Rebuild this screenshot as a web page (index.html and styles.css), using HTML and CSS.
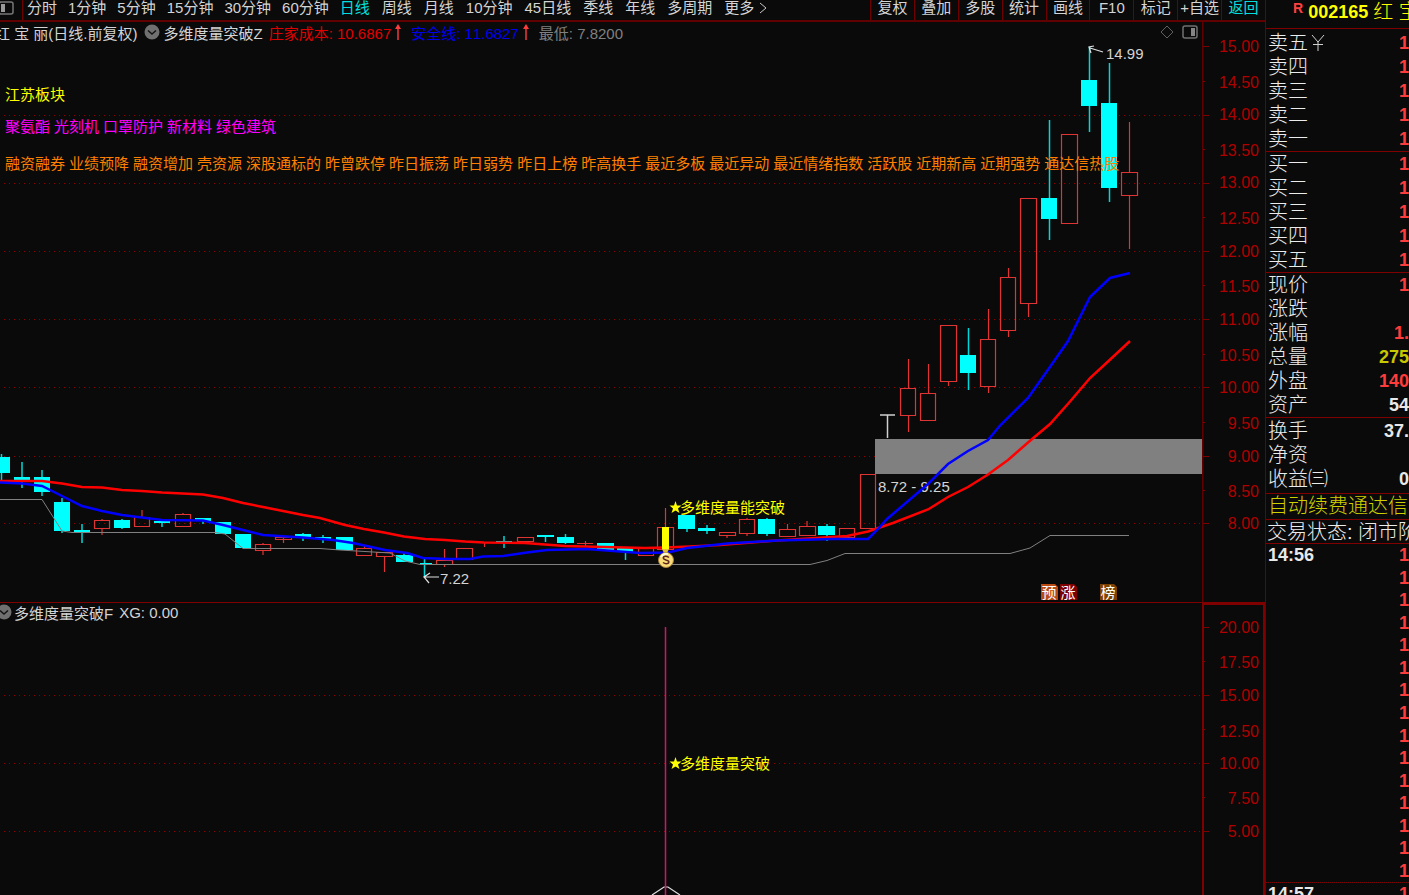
FILE: index.html
```html
<!DOCTYPE html>
<html lang="zh-CN">
<head>
<meta charset="utf-8">
<title>002165 红宝丽</title>
<link rel="stylesheet" href="styles.css">
</head>
<body>
<div class="app">
  <main class="workspace">
    <nav class="toolbar">
      <button class="toggle" aria-label="侧栏">
        <svg width="14" height="14" viewBox="0 0 14 14"><rect x="-1" y="1" width="14" height="12" rx="2" fill="none" stroke="#777" stroke-width="1.5"/><rect x="1" y="3" width="4" height="8" fill="#999"/></svg>
      </button>
      <div class="periods">
        <div class="minutes">
          <button>分时</button><button>1分钟</button><button>5分钟</button><button>15分钟</button><button>30分钟</button><button>60分钟</button>
        </div>
        <div class="days">
          <button class="active">日线</button><button>周线</button><button>月线</button><button>10分钟</button><button>45日线</button><button>季线</button><button>年线</button><button>多周期</button><button class="more">更多<svg width="8" height="12" viewBox="0 0 8 12"><path d="M1 1L7 6L1 11" fill="none" stroke="#c8c8c8"/></svg></button>
        </div>
      </div>
      <div class="tools">
        <button>复权</button><button>叠加</button><button>多股</button><button>统计</button><button>画线</button><button>F10</button><button>标记</button><button>+自选</button><button class="active">返回</button>
      </div>
    </nav>

    <section class="pane upper">
      <div class="plot">
        <svg class="chart" viewBox="0 22 1202 580" preserveAspectRatio="xMinYMin meet">
          <path class="grid" d="M4 115.500H1202M4 183.500H1202M4 251.500H1202M4 319.500H1202M4 387.500H1202M4 456.500H1202M4 523.500H1202"/>
          <rect x="875" y="439" width="327" height="35" fill="#808080"/>
          <path class="fall-wick" d="M1.500 454V482M22 462V488M42 470V496M62 498V533M82 524V543M122 519V529M162 519V527M203 518V524M303 533V541M323 535V543M404 553V562M424.500 559V578M504 536V548M545.500 535V542M565.500 534V544M625.500 547V560M687 515V532M707 525V534M767 518V536M827 524V541M968.500 328V390M1049.500 120V240M1089.500 47V132M1109.500 63V202"/>
          <path class="fall" d="M-6 457H10V473H-6zM14 477H30V480H14zM34 477H50V492H34zM54 502H70V531H54zM74 530H90V532H74zM114 520H130V528H114zM154 521H170V523H154zM195 518H211V521H195zM215 522H231V534H215zM235 534H251V548H235zM295 534H311V538H295zM315 537H331V539H315zM336 537H353V550H336zM396 555H413V562H396zM420 563H432V565H420zM496 541H512V542H496zM537 535H554V537H537zM557 537H574V543H557zM597 543H614V550H597zM617 547H633V552H617zM678 515H695V529H678zM698 528H715V531H698zM758 519H775V534H758zM818 526H835V535H818zM960 355H976V373H960zM1041 198H1057V219H1041zM1081 80H1097V106H1081zM1101 103H1117V188H1101z"/>
          <path class="rise" d="M94.500 520.500H109.500V528.500H94.500zM102 519V521M102 529V535M134.500 517.500H149.500V526.500H134.500zM142 510V517M175.500 514.500H190.500V526.500H175.500zM183 513V515M255.500 544.500H270.500V550.500H255.500zM263 543V545M263 550V555M275.500 537.500H291.500V539.500H275.500zM283.500 536V543M356.500 548.500H371.500V555.500H356.500zM364.500 546V548M376.500 552.500H392.500V556.500H376.500zM384.500 557V572M436.500 560.500H452.500V564.500H436.500zM444.500 549V560M444.500 565V567M456.500 548.500H472.500V559.500H456.500zM476 542.500H492M484.500 543V547M517.500 537.500H533.500V541.500H517.500zM577 543.500H593M585.500 541V546M638.500 548.500H653.500V555.500H638.500zM657.500 527.500H673.500V549.500H657.500zM665.500 508V527M719.500 532.500H735.500V535.500H719.500zM727 536V538M739.500 519.500H754.500V533.500H739.500zM747 518V519M747 534V536M779.500 529.500H795.500V536.500H779.500zM787.500 524V529M799.500 526.500H815.500V535.500H799.500zM807 521V526M839.500 528.500H854.500V537.500H839.500zM860.500 474.500H875.500V528.500H860.500zM900.500 388.500H915.500V415.500H900.500zM908.500 359V388M908.500 416V432M920.500 393.500H935.500V420.500H920.500zM928.500 364V393M940.500 325.500H956.500V381.500H940.500zM948.500 382V386M980.500 339.500H995.500V386.500H980.500zM988.500 309V339M988.500 387V393M1000.500 277.500H1015.500V330.500H1000.500zM1008.500 268V277M1008.500 331V337M1020.500 198.500H1036.500V303.500H1020.500zM1028.500 304V317M1061.500 134.500H1077.500V223.500H1061.500zM1121.500 172.500H1137.500V195.500H1121.500zM1129.500 122V172M1129.500 196V249"/>
          <path d="M880 415H895M887.500 415V438" fill="none" stroke="#d0d0d0" stroke-width="1.500"/>
          <text class="note" x="878" y="492">8.72 - 9.25</text>
          <polyline class="low-line" points="0,499.500 42,499.500 62,531 72,532.500 215,532.500 225,534 243,548.500 320,548.500 340,550 390,553 405,561 420,564.500 810,564.500 827,560.500 845,553.500 1010,553.500 1030,548 1050,535.500 1129,535.500"/>
          <polyline class="cost-line" points="0,481 42,481 62,483.500 82,487 102,487.500 122,490 142,491 162,492.500 203,494.500 223,498 243,503 263,507 283,511 303,515 320,518 345,525 364,529 384,532.500 404,536.500 425,539 445,540 465,541.500 484,542.500 525,543 565,546 605,547 645,548 665,547.500 690,546.500 720,545 770,541 800,539 847,536 868,531.500 893,523 928,509.500 948,497 968,487 988,474.500 1008,460 1028,442.500 1050,424 1070,401.500 1090,378 1108,361.500 1130,341"/>
          <polyline class="safe-line" points="0,482.500 22,483.500 42,486 62,496 82,506 102,511 122,515 142,517.500 162,520 203,520.500 223,525 243,530 263,535 303,537.500 333,540 353,543 385,550 407,553 423,558 447,559 470,559 483,556.500 503,556 527,552.500 547,550 587,549 620,551.500 640,553 668,552.500 687,548 727,543.500 777,540.500 833,539 868,539 878,529 887,519 928,484 948,464 968,451 988,440 1000,425.500 1028,398 1052,364 1068,341 1090,297 1110,278 1130,273"/>
          <path d="M424 577H439M430 573L424 577L429 583" class="pointer"/>
          <text class="note" x="440" y="584">7.22</text>
          <path d="M1103 52L1090 48M1094 46L1089 47L1091 53" class="pointer"/>
          <text class="note" x="1106" y="59">14.99</text>
          <rect x="662" y="527" width="7" height="22" fill="#ff0"/>
          <path d="M662 549H669L667 553H670L666 556L662 553H664z" fill="#e4c33c"/>
          <circle cx="666" cy="560" r="7.500" fill="#f8dc78" stroke="#a8803a"/>
          <path d="M661 557Q663 553 668 554" fill="none" stroke="#fffbe0" stroke-width="2"/>
          <path d="M669 557.500Q666 555.500 663.500 557Q662.500 559 666 560Q670 561 668.500 563Q666 564.500 663 562.500" fill="none" stroke="#5c241c" stroke-width="1.500"/>
          <path class="star" d="M675.500 501L677 505.500H681.500L678 508.500L679.500 513L675.500 510.500L671.500 513L673 508.500L669.500 505.500H674z"/>
          <text class="signal" x="680" y="513">多维度量能突破</text>
          <g class="badge">
            <path d="M1041 584H1055L1058 587V600H1041z" fill="#b84a12"/><text x="1049" y="598">预</text>
            <path d="M1060 584H1074L1077 587V600H1060z" fill="#7e0000"/><text x="1068" y="598">涨</text>
            <path d="M1100 584H1114L1117 587V600H1100z" fill="#7c4000"/><text x="1108" y="598">榜</text>
          </g>
        </svg>
        <div class="overlay">
          <header class="legend">
            <span class="stock">红 宝 丽(日线.前复权)</span>
            <button class="drop" aria-label="指标菜单"><svg width="16" height="16" viewBox="0 0 16 16"><circle cx="8" cy="8" r="7.500" fill="#707070"/><path d="M4 6.500L8 10L12 6.500" fill="none" stroke="#141414" stroke-width="1.500"/></svg></button>
            <span class="name">多维度量突破Z</span>
            <span class="cost">庄家成本: 10.6867</span>
            <svg class="arrow" width="8" height="16" viewBox="0 0 8 16"><path d="M4 0L7 5H4.700V16H3.300V5H1z" fill="#ff3c3c"/></svg>
            <span class="safe">安全线: 11.6827</span>
            <svg class="arrow" width="8" height="16" viewBox="0 0 8 16"><path d="M4 0L7 5H4.700V16H3.300V5H1z" fill="#ff3c3c"/></svg>
            <span class="low">最低: 7.8200</span>
            <span class="legend-tools">
              <button aria-label="标记点"><svg width="14" height="14" viewBox="0 0 14 14"><path d="M7 1L13 7L7 13L1 7z" fill="none" stroke="#606060"/></svg></button>
              <button aria-label="布局"><svg width="16" height="14" viewBox="0 0 16 14"><rect x="1" y="1" width="14" height="12" rx="2" fill="none" stroke="#707070" stroke-width="1.500"/><rect x="9" y="3" width="4" height="8" fill="#858585"/></svg></button>
            </span>
          </header>
          <p class="region">江苏板块</p>
          <p class="themes"><span>聚氨酯</span><span>光刻机</span><span>口罩防护</span><span>新材料</span><span>绿色建筑</span></p>
          <p class="styles"><span>融资融券</span><span>业绩预降</span><span>融资增加</span><span>壳资源</span><span>深股通标的</span><span>昨曾跌停</span><span>昨日振荡</span><span>昨日弱势</span><span>昨日上榜</span><span>昨高换手</span><span>最近多板</span><span>最近异动</span><span>最近情绪指数</span><span>活跃股</span><span>近期新高</span><span>近期强势</span><span>通达信热股</span></p>
        </div>
      </div>
      <svg class="axis" viewBox="1202 22 63 580" preserveAspectRatio="xMinYMin meet">
        <path d="M1202.500 22V602" stroke="#600000" stroke-width="2"/>
        <path class="tick" d="M1203 46.500H1209M1203 115.500H1209M1203 183.500H1209M1203 251.500H1209M1203 319.500H1209M1203 387.500H1209M1203 456.500H1209M1203 523.500H1209M1203 81.500H1205M1203 149.500H1205M1203 217.500H1205M1203 285.500H1205M1203 354.500H1205M1203 422.500H1205M1203 490.500H1205"/>
        <g text-anchor="end">
          <text x="1259" y="52">15.00</text><text x="1259" y="88">14.50</text><text x="1259" y="120">14.00</text><text x="1259" y="156">13.50</text><text x="1259" y="188">13.00</text><text x="1259" y="224">12.50</text><text x="1259" y="257">12.00</text><text x="1259" y="292">11.50</text><text x="1259" y="325">11.00</text><text x="1259" y="361">10.50</text><text x="1259" y="393">10.00</text><text x="1259" y="429">9.50</text><text x="1259" y="462">9.00</text><text x="1259" y="497">8.50</text><text x="1259" y="529">8.00</text>
        </g>
      </svg>
    </section>

    <section class="pane lower">
      <div class="plot">
        <svg class="chart" viewBox="0 603 1202 292" preserveAspectRatio="xMinYMin meet">
          <path class="grid" d="M4 695.500H1202M4 763.500H1202M4 831.500H1202"/>
          <path d="M652 895L664 887H668L680 895" fill="none" stroke="#e0e0e0" stroke-width="1.200"/>
          <path d="M665.500 627V895" stroke="#d8106c" stroke-width="1.500"/>
          <path class="star" d="M675.500 757L677 761.500H681.500L678 764.500L679.500 769L675.500 766.500L671.500 769L673 764.500L669.500 761.500H674z"/>
          <text class="signal" x="680" y="769">多维度量突破</text>
        </svg>
        <div class="overlay">
          <header class="legend">
            <button class="drop cut" aria-label="指标菜单"><svg width="16" height="16" viewBox="0 0 16 16"><circle cx="8" cy="8" r="7.500" fill="#707070"/><path d="M4 6.500L8 10L12 6.500" fill="none" stroke="#141414" stroke-width="1.500"/></svg></button>
            <span class="name">多维度量突破F</span>
            <span>XG: 0.00</span>
          </header>
        </div>
      </div>
      <svg class="axis" viewBox="1202 603 63 292" preserveAspectRatio="xMinYMin meet">
        <path d="M1203 895V604H1264V895" fill="none" stroke="#800000" stroke-width="2"/>
        <path class="tick" d="M1204 627.500H1209M1204 695.500H1209M1204 763.500H1209M1204 831.500H1209M1204 661.500H1205M1204 729.500H1205M1204 797.500H1205"/>
        <g text-anchor="end">
          <text x="1259" y="633">20.00</text><text x="1259" y="668">17.50</text><text x="1259" y="701">15.00</text><text x="1259" y="737">12.50</text><text x="1259" y="769">10.00</text><text x="1259" y="804">7.50</text><text x="1259" y="837">5.00</text>
        </g>
      </svg>
    </section>
  </main>

  <aside class="quote">
    <h1><sup>R</sup><b>002165</b><span>红 宝 丽</span></h1>
    <dl class="asks">
      <div><dt>卖五<svg width="14" height="18" viewBox="0 0 14 18"><path d="M1 1L7 8L13 1M7 8V17M2 10.500H12" fill="none" stroke="#d0d0d0"/></svg></dt><dd class="up">1</dd></div>
      <div><dt>卖四</dt><dd class="up">1</dd></div>
      <div><dt>卖三</dt><dd class="up">1</dd></div>
      <div><dt>卖二</dt><dd class="up">1</dd></div>
      <div><dt>卖一</dt><dd class="up">1</dd></div>
    </dl>
    <dl>
      <div><dt>买一</dt><dd class="up">1</dd></div>
      <div><dt>买二</dt><dd class="up">1</dd></div>
      <div><dt>买三</dt><dd class="up">1</dd></div>
      <div><dt>买四</dt><dd class="up">1</dd></div>
      <div><dt>买五</dt><dd class="up">1</dd></div>
    </dl>
    <dl>
      <div><dt>现价</dt><dd class="up">1</dd></div>
      <div><dt>涨跌</dt><dd></dd></div>
      <div><dt>涨幅</dt><dd class="up">1.</dd></div>
      <div><dt>总量</dt><dd class="volume">275</dd></div>
      <div><dt>外盘</dt><dd class="up">140</dd></div>
      <div><dt>资产</dt><dd>54</dd></div>
    </dl>
    <dl class="ratios">
      <div><dt>换手</dt><dd>37.</dd></div>
      <div><dt>净资</dt><dd></dd></div>
      <div><dt>收益㈢</dt><dd>0</dd></div>
    </dl>
    <p class="promo">自动续费通达信</p>
    <p class="status">交易状态: 闭市阶段</p>
    <ol class="ticks">
      <li><time>14:56</time><span>1</span></li>
      <li><span>1</span></li><li><span>1</span></li><li><span>1</span></li><li><span>1</span></li><li><span>1</span></li><li><span>1</span></li><li><span>1</span></li><li><span>1</span></li><li><span>1</span></li><li><span>1</span></li><li><span>1</span></li><li><span>1</span></li><li><span>1</span></li><li><span>1</span></li>
    </ol>
    <div class="next"><time>14:57</time><span>1</span></div>
  </aside>
</div>
</body>
</html>
```

FILE: styles.css
```css
* { box-sizing: border-box; }

body, h1, p, dl, dd, ol {
  margin: 0;
  padding: 0;
}

body {
  background: #0a0a0a;
  color: #d4d4d4;
  font-family: "Liberation Sans", "Noto Sans CJK SC", sans-serif;
  font-size: 15px;
  font-weight: 400;
  font-kerning: none;
}

button {
  margin: 0;
  padding: 0;
  border: 0;
  background: none;
  color: inherit;
  font: inherit;
  line-height: inherit;
  white-space: nowrap;
}

svg { display: block; flex: none; }

.app {
  display: grid;
  grid-template-columns: minmax(0, 1fr) 144px;
  height: 100vh;
  overflow: hidden;
}

.workspace {
  display: grid;
  grid-template-rows: 22px 581fr 292fr;
  min-width: 0;
}

/* toolbar */
.toolbar {
  display: flex;
  border-bottom: 2px solid #600000;
  line-height: 16px;
  overflow: hidden;
}
.toolbar .active { color: #00e0e0; }
.toggle {
  width: 23px;
  border-right: 1px solid #700000;
}
.toggle svg { margin-bottom: 4px; }
.periods {
  display: flex;
  flex: 1;
  gap: 11px;
  padding-left: 4px;
  align-items: flex-start;
}
.minutes { display: flex; gap: 11px; }
.days { display: flex; gap: 12px; }
.more {
  display: flex;
  align-items: center;
  gap: 5px;
}
.tools {
  display: grid;
  grid-template-columns: repeat(9, 1fr);
  width: 395px;
}
.tools button {
  display: flex;
  justify-content: center;
  border-left: 1px solid #700000;
}

/* chart panes */
.pane {
  display: grid;
  grid-template-columns: minmax(0, 1fr) 63px;
  min-height: 0;
}
.upper { border-bottom: 1px solid #800000; }
.plot {
  position: relative;
  min-height: 0;
  overflow: hidden;
}
.chart, .axis {
  width: 100%;
  height: 100%;
}
.axis { overflow: hidden; }
.axis text {
  fill: #b00000;
  font-size: 16px;
}
.tick { stroke: #800000; }
.grid {
  fill: none;
  stroke: #900000;
  stroke-dasharray: 1 4;
}
.fall { fill: #0ff; }
.fall-wick { stroke: #00d8d8; stroke-width: 1.5; }
.rise { fill: none; stroke: #e03434; stroke-width: 1.2; }
.low-line { fill: none; stroke: #808080; }
.cost-line { fill: none; stroke: #f00; stroke-width: 2.5; }
.safe-line { fill: none; stroke: #00f; stroke-width: 2.5; }
.pointer { fill: none; stroke: #e0e0e0; stroke-width: 1.2; }
.note { fill: #d4d4d4; font-size: 15px; }
.signal { fill: #ff0; font-size: 15px; }
.star { fill: #ff0; }
.badge text {
  fill: #fff;
  font-size: 15px;
  text-anchor: middle;
}

.overlay {
  position: absolute;
  inset: 0;
  white-space: nowrap;
}
.legend {
  display: flex;
  align-items: center;
  gap: 6px;
  height: 20px;
}
.stock { margin-left: -5px; }
.name { margin-left: -2px; }
.cost { color: #e00000; }
.safe { margin-left: 3px; color: #0000f0; }
.arrow { margin-left: -3px; }
.low { margin-left: 3px; color: #808080; }
.cut { margin-left: -4px; }
.lower .name { margin-left: -4px; }
.lower .legend { height: 18px; }
.legend-tools {
  display: flex;
  gap: 8px;
  margin-left: auto;
  padding-right: 4px;
}
.region, .themes, .styles {
  display: flex;
  gap: 4px;
  padding-left: 5px;
  line-height: 20px;
}
.region { margin-top: 43px; color: #ff0; }
.themes { margin-top: 12px; color: #f0f; }
.styles { margin-top: 17px; color: #ff8000; }

/* quote panel */
.quote {
  display: flex;
  flex-direction: column;
  min-height: 0;
  border-left: 1px solid #700000;
  overflow: hidden;
  white-space: nowrap;
  color: #ececec;
  font-size: 20px;
  font-weight: 300;
  line-height: 24px;
}
.quote h1 {
  display: flex;
  gap: 5px;
  height: 29px;
  padding-left: 27px;
  border-bottom: 1px solid #800000;
  color: #ff0;
  font-size: 20px;
  font-weight: 300;
}
.quote sup {
  color: #ff4040;
  font-size: 14px;
  font-weight: 700;
  line-height: 16px;
}
.quote b {
  font-size: 18px;
  font-weight: 700;
}
.quote dl { border-bottom: 1px solid #800000; }
.quote dl > div {
  display: flex;
  justify-content: space-between;
  height: 24px;
  padding-left: 2px;
}
.quote .asks { padding-top: 2px; }
.quote .ratios { padding: 1px 0 2px; }
.quote dt {
  display: flex;
  align-items: center;
  gap: 3px;
}
.quote dd {
  color: #e8e8e8;
  font-size: 18px;
  font-weight: 700;
}
.quote .up { color: #ff3c3c; }
.quote .volume { color: #c8c800; }
.quote .promo {
  height: 26px;
  padding-left: 2px;
  border-bottom: 1px solid #800000;
  color: #d0d000;
}
.status {
  height: 24px;
  padding-left: 1px;
  border-bottom: 1px solid #800000;
}
.ticks {
  display: flex;
  flex: 1;
  flex-direction: column;
  min-height: 0;
  border-bottom: 1px dotted #800000;
  list-style: none;
}
.ticks li, .next {
  display: flex;
  flex: 1;
  align-items: center;
  padding-left: 2px;
  color: #e8e8e8;
  font-size: 18px;
  font-weight: 700;
  line-height: 22px;
}
.next {
  flex: none;
  align-items: flex-start;
  height: 12px;
}
.ticks span, .next span {
  margin-left: auto;
  color: #ff3c3c;
}
```
